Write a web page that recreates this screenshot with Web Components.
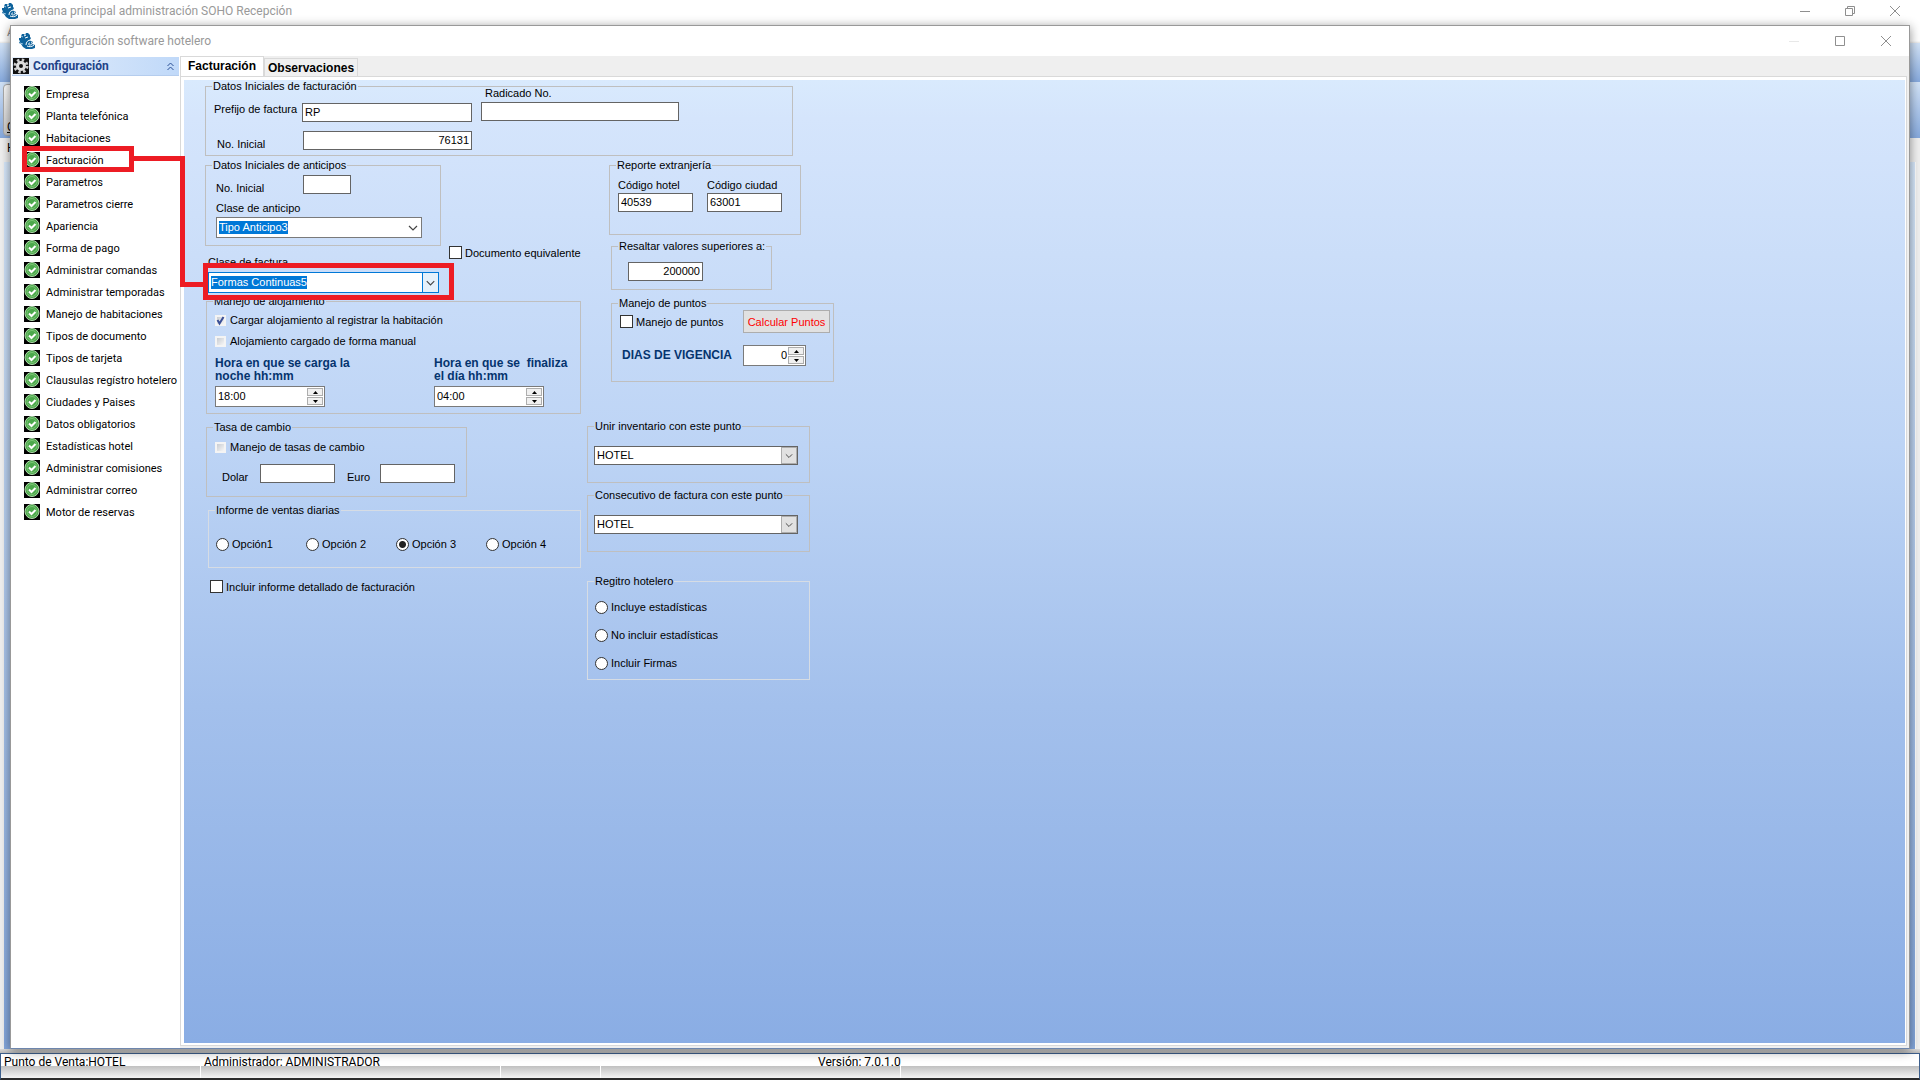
<!DOCTYPE html>
<html lang="es">
<head>
<meta charset="utf-8">
<title>Ventana principal administración SOHO Recepción</title>
<style>
    html, body { height: 100%; margin: 0; }
    body {
        --ui: Roboto, "Open Sans", sans-serif;
        --nav: Roboto, "Open Sans", sans-serif;
        --mark: #ed1c24;
        font: 11px/12px "Liberation Sans", Arial, sans-serif;
        color: #000;
        overflow: hidden;
    }

    /* form */
    .form { display: flex; flex-direction: column; align-items: flex-start; padding-left: 21px; }
    .columns { display: flex; gap: 6px; margin-top: 3px; }
    .column { display: flex; flex-direction: column; align-items: flex-start; }
    .column.left { width: 376px; }
    .row { display: flex; }
    .stack { display: flex; flex-direction: column; align-items: flex-start; }
    .indent { margin-left: 22px; }

    #facturacion { width: 588px; --min: 76px; --pad: 0 8px; }
    #facturacion .stack.a { gap: 9px; padding-top: 17px; width: 267px; }
    #facturacion .stack.b { padding-top: 1px; }
    #anticipos { width: 236px; --min: 87px; --pad: 10px 10px; }
    #clase { padding: 10px 0 0 3px; width: 231px; margin-right: 10px; }
    #alojamiento { width: 375px; margin: 2px 0 0 1px; --min: 119px; --pad: 12px 8px; }
    #alojamiento .stack { gap: 7px; }
    #alojamiento .row { padding-top: 9px; }
    #tasa { width: 261px; margin: 7px 0 0 1px; --min: 76px; --pad: 13px 8px; }
    #tasa .row { gap: 12px; padding: 10px 0 0 7px; }
    #ventas { width: 373px; margin: 7px 0 12px 3px; --min: 64px; --pad: 27px 7px; --line: #d6dce4; }
    #detalle { margin-left: 5px; }
    #extranjeria { width: 192px; --min: 76px; --pad: 14px 8px; }
    #extranjeria .row { gap: 14px; }
    #resaltar { width: 161px; margin: 5px 0 0 2px; --min: 50px; --pad: 16px 16px; }
    #puntos { width: 223px; margin: 7px 0 0 2px; --min: 85px; --pad: 7px 8px; }
    #puntos .stack { gap: 12px; }
    #puntos .row { align-items: center; }
    #puntos check-option { width: 123px; }
    #inventario { width: 223px; margin-top: 38px; --min: 63px; --pad: 20px 6px; }
    #consecutivo { width: 223px; margin-top: 6px; --min: 63px; --pad: 20px 6px; }
    #registro { width: 223px; margin-top: 23px; --min: 105px; --pad: 19px 7px; --line: #d6dce4; }
</style>
</head>
<body>
<main-desktop>
    <app-window slot="window" caption="Configuración software hotelero">
        <side-menu slot="side" caption="Configuración">
            <menu-entry>Empresa</menu-entry>
            <menu-entry>Planta telefónica</menu-entry>
            <menu-entry>Habitaciones</menu-entry>
            <menu-entry marked>Facturación</menu-entry>
            <menu-entry>Parametros</menu-entry>
            <menu-entry>Parametros cierre</menu-entry>
            <menu-entry>Apariencia</menu-entry>
            <menu-entry>Forma de pago</menu-entry>
            <menu-entry>Administrar comandas</menu-entry>
            <menu-entry>Administrar temporadas</menu-entry>
            <menu-entry>Manejo de habitaciones</menu-entry>
            <menu-entry>Tipos de documento</menu-entry>
            <menu-entry>Tipos de tarjeta</menu-entry>
            <menu-entry>Clausulas regístro hotelero</menu-entry>
            <menu-entry>Ciudades y Paises</menu-entry>
            <menu-entry>Datos obligatorios</menu-entry>
            <menu-entry>Estadísticas hotel</menu-entry>
            <menu-entry>Administrar comisiones</menu-entry>
            <menu-entry>Administrar correo</menu-entry>
            <menu-entry>Motor de reservas</menu-entry>
        </side-menu>
        <tab-panel tabs="Facturación,Observaciones">
            <div class="form">
                <group-box id="facturacion" caption="Datos Iniciales de facturación">
                    <div class="row">
                        <div class="stack a">
                            <text-field label="Prefijo de factura" value="RP" style="--label: 88px; --width: 170px; --align: flex-start"></text-field>
                            <text-field label="No. Inicial" value="76131" numeric style="--label: 89px; --width: 169px; --inset: 3px"></text-field>
                        </div>
                        <div class="stack b">
                            <text-field stacked label="Radicado No." style="--width: 198px; --inset: 4px; --gap: 3px"></text-field>
                        </div>
                    </div>
                </group-box>
                <div class="columns">
                    <div class="column left">
                        <group-box id="anticipos" caption="Datos Iniciales de anticipos">
                            <div class="stack">
                                <text-field label="No. Inicial" style="--label: 87px; --width: 48px"></text-field>
                                <combo-box label="Clase de anticipo" value="Tipo Anticipo3" selected style="--width: 206px; --height: 21px; --gap: 3px; --lead: 8px"></combo-box>
                            </div>
                        </group-box>
                        <div class="row">
                            <div id="clase">
                                <combo-box label="Clase de factura" value="Formas Continuas5" selected focused marked style="--width: 231px; --height: 21px; --gap: 4px"></combo-box>
                            </div>
                            <check-option large label="Documento equivalente"></check-option>
                        </div>
                        <group-box id="alojamiento" caption="Manejo de alojamiento">
                            <div class="stack">
                                <check-option disabled checked label="Cargar alojamiento al registrar la habitación"></check-option>
                                <check-option disabled label="Alojamiento cargado de forma manual"></check-option>
                            </div>
                            <div class="row">
                                <spin-box stacked label="Hora en que se carga la|noche hh:mm" value="18:00" style="--width: 110px; --label: 219px"></spin-box>
                                <spin-box stacked label="Hora en que se  finaliza|el día hh:mm" value="04:00" style="--width: 110px"></spin-box>
                            </div>
                        </group-box>
                        <group-box id="tasa" caption="Tasa de cambio">
                            <check-option disabled label="Manejo de tasas de cambio"></check-option>
                            <div class="row">
                                <text-field label="Dolar" style="--label: 38px; --width: 75px"></text-field>
                                <text-field label="Euro" style="--label: 33px; --width: 75px"></text-field>
                            </div>
                        </group-box>
                        <group-box id="ventas" caption="Informe de ventas diarias">
                            <radio-set options="Opción1,Opción 2,Opción 3,Opción 4" value="Opción 3"></radio-set>
                        </group-box>
                        <check-option id="detalle" large label="Incluir informe detallado de facturación"></check-option>
                    </div>
                    <div class="column">
                        <div class="stack indent">
                            <group-box id="extranjeria" caption="Reporte extranjería">
                                <div class="row">
                                    <text-field stacked label="Código hotel" value="40539" style="--width: 75px; --gap: 2px"></text-field>
                                    <text-field stacked label="Código ciudad" value="63001" style="--width: 75px; --gap: 2px"></text-field>
                                </div>
                            </group-box>
                            <group-box id="resaltar" caption="Resaltar valores superiores a:">
                                <text-field label="" name="Resaltar valores superiores a" value="200000" numeric style="--label: 0px; --width: 75px"></text-field>
                            </group-box>
                            <group-box id="puntos" caption="Manejo de puntos">
                                <div class="stack">
                                    <div class="row">
                                        <check-option large label="Manejo de puntos"></check-option>
                                        <push-button>Calcular Puntos</push-button>
                                    </div>
                                    <spin-box label="DIAS DE VIGENCIA" value="0" numeric style="--width: 63px; --label: 123px"></spin-box>
                                </div>
                            </group-box>
                        </div>
                        <group-box id="inventario" caption="Unir inventario con este punto">
                            <combo-box name="Unir inventario con este punto" value="HOTEL" boxed style="--width: 204px; --height: 19px"></combo-box>
                        </group-box>
                        <group-box id="consecutivo" caption="Consecutivo de factura con este punto">
                            <combo-box name="Consecutivo de factura con este punto" value="HOTEL" boxed style="--width: 204px; --height: 19px"></combo-box>
                        </group-box>
                        <group-box id="registro" caption="Regitro hotelero">
                            <radio-set vertical options="Incluye estadísticas,No incluir estadísticas,Incluir Firmas"></radio-set>
                        </group-box>
                    </div>
                </div>
            </div>
        </tab-panel>
    </app-window>
    <status-bar slot="status"></status-bar>
</main-desktop>

<script>
const appIcon = `
    <svg class="app" width="16" height="16" viewBox="0 0 16 16" aria-hidden="true">
        <path fill="#0f639c" d="M3 1h2l1 1 1-2h2l2 2v2l1 1-1 2 1 1 2 1-1 2 3 1v3l-3 1H7l-3-2-2-3-2-1 1-2-1-1V5h2V3z"/>
        <path fill="none" stroke="#fff" d="M5 3l2-1M6 5l3-1M7 12c0-3 2-5 5-5M8 13c2 1 5 1 7-1M11 10c-2 0-2 2 0 2s3-2 1-3"/>
        <path fill="none" stroke="#9cc6e2" d="M2 3l2 1M1 10l3 1"/>
    </svg>`;

const glyphs = {
    minimize: '<path d="M0 5.500h10"/>',
    maximize: '<path d="M.5.500h9v9h-9z"/>',
    restore: '<path d="M.5 2.500h7v7h-7zM2.500 2.500v-2h7v7h-2"/>',
    close: '<path d="M0 0l10 10M10 0L0 10"/>'
};

const controls = (names) => names.map((n) => `
    <button class="ctl ${n}" aria-label="${n}">
        <svg width="10" height="10" viewBox="0 0 10 10" fill="none" stroke="#8f8f8f">${glyphs[n]}</svg>
    </button>`).join('');

const titleCss = `
    .title { display: flex; align-items: center; font: 12px/16px var(--ui); color: #999; background: #fff; }
    .title .text { flex: 1; padding-left: 5px; white-space: nowrap; }
    .ctl { border: 0; padding: 0; background: none; width: 46px; height: 20px; display: grid; place-items: center; }
    .app { flex: none; }`;

// small base: every element renders its own template string once
class Base extends HTMLElement {
    connectedCallback() {
        if (this.shadowRoot) return;
        this.attachShadow({ mode: 'open' }).innerHTML = this.render();
    }
    attr(name) {
        return this.getAttribute(name) || '';
    }
    list(name) {
        return this.attr(name).split(',');
    }
}

class MainDesktop extends Base {
    render() {
        return `
            <style>
                :host { display: flex; flex-direction: column; height: 100vh; position: relative; background: #f0f0f0; }
                ${titleCss}
                .title { height: 22px; padding: 0 3px 0 2px; flex: none; }
                .ctl { width: 45px; }
                .menu { height: 21px; line-height: 21px; padding-left: 7px; background: linear-gradient(#fff 19px, #e6e6e6); font-family: var(--ui); font-size: 12px; color: #888; }
                .band { height: 39px; background: linear-gradient(#d3e4f8, #86a9dd); }
                .tools { height: 56px; background: linear-gradient(#d3e4f8, #86a9dd); display: flex; padding: 2px 3px; box-sizing: border-box; }
                .tool { border: 1px solid #aaa; border-radius: 4px; background: linear-gradient(#fff, #c9c9c9); width: 60px; padding: 34px 0 0 3px; text-align: left; font: 12px/12px var(--ui); text-decoration: underline; }
                .tabs { height: 24px; padding-left: 7px; font: 12px/20px var(--ui); }
                .work { flex: 1; margin: 0 4px 0 4px; background: linear-gradient(#d9eafd, #85a8de); border-right: 1px solid #fff; }
                .gap { height: 4px; background: linear-gradient(#ddd, #b9b9b9); }
                ::slotted(app-window) { position: absolute; inset: 25px 10px 31px 10px; }
            </style>
            <header class="title">${appIcon}<span class="text">Ventana principal administración SOHO Recepción</span>${controls(['minimize', 'restore', 'close'])}</header>
            <div class="menu">A</div>
            <div class="band"></div>
            <div class="tools"><button class="tool">C</button></div>
            <div class="tabs">H</div>
            <div class="work"></div>
            <div class="gap"></div>
            <slot name="status"></slot>
            <slot name="window"></slot>`;
    }
}

class AppWindow extends Base {
    render() {
        return `
            <style>
                :host { display: flex; flex-direction: column; background: #efefef; border: 1px solid #999; border-bottom-color: #6d86ad; box-sizing: border-box; box-shadow: 0 2px 10px rgba(0, 0, 0, .45); }
                ${titleCss}
                .title { height: 30px; padding-left: 8px; flex: none; }
                .minimize { opacity: .2; }
                .body { flex: 1; display: flex; min-height: 0; }
                ::slotted(tab-panel) { flex: 1; }
                .link { position: absolute; left: 121px; top: 129px; pointer-events: none; }
            </style>
            <header class="title">${appIcon}<span class="text">${this.attr('caption')}</span>${controls(['minimize', 'maximize', 'close'])}</header>
            <div class="body"><slot name="side"></slot><slot></slot></div>
            <svg class="link" width="74" height="134" fill="none" stroke="#ed1c24" stroke-width="5" aria-hidden="true"><path d="M0 3.500H50.500V129.500H72"/></svg>`;
    }
}

class SideMenu extends Base {
    render() {
        return `
            <style>
                :host { display: block; width: 169px; background: #fff; }
                .head { display: flex; align-items: center; height: 18px; margin: 1px 1px 0; padding: 0 4px 0 1px; background: linear-gradient(90deg, #e6effb, #c0d9f9); border-bottom: 1px solid #b5cdee; font: bold 12px/18px var(--nav); color: #1e4287; }
                .head span { flex: 1; padding-left: 4px; }
                nav { padding-top: 8px; }
            </style>
            <div class="head">
                <svg width="16" height="16" viewBox="0 0 16 16" aria-hidden="true">
                    <path fill="#111" d="M0 0h16v16H0z"/>
                    <circle cx="8" cy="8" r="6" fill="none" stroke="#ccc" stroke-width="3" stroke-dasharray="2.400 2.312"/>
                    <circle cx="8" cy="8" r="3.500" fill="none" stroke="#ddd" stroke-width="3"/>
                </svg>
                <span>${this.attr('caption')}</span>
                <svg width="9" height="9" viewBox="0 0 9 9" fill="none" stroke="#2a4f96" aria-hidden="true"><path d="M1.500 4l3-3 3 3M1.500 8l3-3 3 3"/></svg>
            </div>
            <nav><slot></slot></nav>`;
    }
}

class MenuEntry extends Base {
    render() {
        return `
            <style>
                :host { display: block; position: relative; }
                a { display: flex; align-items: flex-start; gap: 6px; height: 22px; padding-left: 13px; box-sizing: border-box; padding-top: 2px; font: 11px/18px var(--nav); color: #000; text-decoration: none; white-space: nowrap; }
                svg { flex: none; }
                :host([marked])::after { content: ""; position: absolute; left: 11px; top: -4px; width: 102px; height: 16px; border: 5px solid var(--mark); }
            </style>
            <a href="#">
                <svg width="16" height="16" viewBox="0 0 16 16" aria-hidden="true">
                    <path fill="#000" d="M0 0h16v16H0z"/>
                    <circle cx="8" cy="7.500" r="7" fill="#4ba84b" stroke="#b5dcb0"/>
                    <circle cx="8" cy="7.500" r="5" fill="none" stroke="#7cc675"/>
                    <path d="M5 7.500l2.500 2.500L11.500 6" fill="none" stroke="#fff" stroke-width="2"/>
                </svg>
                <slot></slot>
            </a>`;
    }
}

class TabPanel extends Base {
    render() {
        const tabs = this.list('tabs').map((t, i) => `<button role="tab" aria-selected="${i === 0}">${t}</button>`).join('');
        return `
            <style>
                :host { display: flex; flex-direction: column; min-width: 0; padding-right: 2px; padding-bottom: 2px; }
                .tabs { display: flex; align-items: flex-end; height: 20px; }
                button { font: bold 12px/16px "Liberation Sans", Arial, sans-serif; border: 1px solid #d9d9d9; border-bottom: 0; background: #f0f0f0; height: 18px; padding: 0 3px; }
                button[aria-selected="true"] { height: 21px; margin-bottom: -1px; padding: 0 7px 2px; background: #fff; }
                .panel { flex: 1; border: 1px solid #d9d9d9; background: #fff; padding: 3px 1px 2px 3px; display: flex; }
                .page { flex: 1; background: linear-gradient(#d9eafd, #d5e5fc 4%, #bdd4f5 38%, #a3c0ec 65%, #8aade4); }
            </style>
            <div class="tabs" role="tablist">${tabs}</div>
            <div class="panel"><div class="page"><slot></slot></div></div>`;
    }
}

class GroupBox extends Base {
    render() {
        return `
            <style>
                :host { display: block; box-sizing: border-box; }
                fieldset { margin: 0; padding: 0; border: 1px solid var(--line, #bfbfbf); box-sizing: border-box; min-width: 0; min-height: var(--min); }
                legend { margin-left: 6px; padding: 0 1px; line-height: 12px; white-space: nowrap; }
                .in { margin-top: -6px; padding: var(--pad); padding-bottom: 0; }
            </style>
            <fieldset><legend>${this.attr('caption')}</legend><div class="in"><slot></slot></div></fieldset>`;
    }
}

class TextField extends Base {
    render() {
        const name = this.attr('name');
        return `
            <style>
                :host { display: flex; align-items: var(--align, flex-end); }
                :host([stacked]) { flex-direction: column; align-items: flex-start; gap: var(--gap, 0); }
                label { width: var(--label, auto); flex: none; padding-left: var(--inset, 0); white-space: nowrap; box-sizing: border-box; }
                input { font: inherit; width: var(--width); height: 19px; box-sizing: border-box; border: 1px solid #646464; background: #fff; padding: 0 2px 2px; margin: 0; }
                :host([numeric]) input { text-align: right; }
            </style>
            <label for="f">${this.attr('label')}</label><input id="f" ${name ? `aria-label="${name}"` : ''} value="${this.attr('value')}">`;
    }
}

class ComboBox extends Base {
    render() {
        const name = this.attr('name');
        const label = this.attr('label');
        return `
            <style>
                :host { display: flex; flex-direction: column; gap: var(--gap, 0); padding-top: var(--lead, 0); }
                .box { position: relative; display: flex; width: var(--width); height: var(--height); }
                select { appearance: none; font: inherit; flex: 1; border: 1px solid #7a7a7a; border-radius: 0; background: #fff; color: #000; padding: 0 2px 1px; margin: 0; outline: 0; }
                :host([selected]) select { color: #fff; }
                svg { position: absolute; right: 1px; top: 1px; width: 16px; height: calc(100% - 2px); box-sizing: border-box; pointer-events: none; }
                :host([boxed]) svg { background: #e1e1e1; border: 1px solid #adadad; }
                :host([boxed]) select { border-color: #646464; }
                :host([focused]) select { border-color: #0078d7; }
                :host([focused]) svg { background: #e5f1fb; border-left: 1px solid #0078d7; }
                :host([selected]) .box::before { content: attr(data-text); position: absolute; left: 3px; top: 4px; line-height: 13px; color: #fff; background: #0078d7; pointer-events: none; }
                :host([marked]) .box::after { content: ""; position: absolute; inset: -9px -15px -7px -5px; border: 5px solid var(--mark); pointer-events: none; }
            </style>
            ${label ? `<label for="c">${label}</label>` : ''}
            <div class="box" data-text="${this.attr('value')}">
                <select id="c" ${name ? `aria-label="${name}"` : ''}><option>${this.attr('value')}</option></select>
                <svg viewBox="0 0 16 19" fill="none" stroke="#444" stroke-width="1.200"><path d="M4 8l4 4 4-4"/></svg>
            </div>`;
    }
}

class SpinBox extends Base {
    render() {
        return `
            <style>
                :host { display: flex; align-items: center; }
                :host([stacked]) { flex-direction: column; align-items: flex-start; gap: 3px; }
                label { width: var(--label, auto); font: bold 12px/13px "Liberation Sans", Arial, sans-serif; color: #05346e; white-space: pre; padding-left: 2px; box-sizing: border-box; }
                :host([stacked]) label { padding-left: 0; }
                .box { display: flex; width: var(--width); height: 21px; box-sizing: border-box; border: 1px solid #7a7a7a; background: #fff; padding: 1px; }
                input { font: inherit; flex: 1; min-width: 0; border: 0; padding: 0 1px 2px; margin: 0; background: none; }
                :host([numeric]) input { text-align: right; }
                .arrows { display: flex; flex-direction: column; gap: 1px; width: 16px; }
                button { flex: 1; padding: 0; border: 1px solid #adadad; background: #f0f0f0; display: grid; place-items: center; }
            </style>
            <label for="s">${this.attr('label').replace('|', '\n')}</label>
            <div class="box">
                <input id="s" value="${this.attr('value')}">
                <div class="arrows">
                    <button aria-label="Subir"><svg width="5" height="3"><path d="M0 3L2.500 0 5 3z"/></svg></button>
                    <button aria-label="Bajar"><svg width="5" height="3"><path d="M0 0h5L2.500 3z"/></svg></button>
                </div>
            </div>`;
    }
}

class CheckOption extends Base {
    render() {
        return `
            <style>
                :host { display: block; white-space: nowrap; }
                label { display: inline-flex; align-items: center; gap: 4px; height: 14px; vertical-align: top; }
                :host([large]) label { height: 13px; gap: 3px; }
                input { appearance: none; margin: 0; width: 11px; height: 11px; border: 2px solid #f4f4f4; background: linear-gradient(135deg, #c8ccd2, #f6f6f6); box-sizing: border-box; }
                :host([large]) input { width: 13px; height: 13px; border: 1px solid #333; background: #fff; }
                .tick { position: absolute; width: 11px; height: 11px; }
            </style>
            <label>
                <input type="checkbox" ${this.hasAttribute('checked') ? 'checked' : ''}>
                ${this.hasAttribute('checked') ? '<svg class="tick" viewBox="0 0 11 11" fill="none" stroke="#3a4f96" stroke-width="2"><path d="M2.500 5l2 3.500L8.500 2"/></svg>' : ''}
                <span>${this.attr('label')}</span>
            </label>`;
    }
}

class RadioSet extends Base {
    render() {
        const items = this.list('options').map((o) => `
            <label><input type="radio" name="r" ${o === this.attr('value') ? 'checked' : ''}>${o}</label>`).join('');
        return `
            <style>
                :host { display: flex; }
                :host([vertical]) { flex-direction: column; gap: 14px; }
                label { display: flex; flex: none; align-items: center; gap: 3px; width: 90px; height: 14px; white-space: nowrap; }
                input { appearance: none; margin: 0; width: 13px; height: 13px; flex: none; border: 1px solid #333; border-radius: 50%; background: #fff; box-sizing: border-box; }
                input:checked { background: radial-gradient(circle, #222 3px, #fff 4px); }
            </style>${items}`;
    }
}

class PushButton extends Base {
    render() {
        return `
            <style>
                :host { display: block; }
                button { font: inherit; width: 87px; height: 23px; padding: 0; border: 1px solid #adadad; background: #e1e1e1; color: #f00; white-space: nowrap; }
            </style>
            <button><slot></slot></button>`;
    }
}

class StatusBar extends Base {
    render() {
        return `
            <style>
                :host { display: grid; grid-template-columns: 199px 299px 99px 299px 1fr; column-gap: 1px; flex: none; border: 1px solid #3d5f8c; border-bottom: 2px solid #2b2b2b; background: #fff; height: 24px; font: 12px/16px var(--ui); }
                span { padding-left: 3px; white-space: nowrap; background: linear-gradient(#fff 12px, #c0c0c0 12px, #f4f4f4 24px); }
                .version { padding-left: 217px; }
            </style>
            <span>Punto de Venta:HOTEL</span><span>Administrador: ADMINISTRADOR</span><span></span><span class="version">Versión: 7.0.1.0</span><span></span>`;
    }
}

customElements.define('main-desktop', MainDesktop);
customElements.define('app-window', AppWindow);
customElements.define('side-menu', SideMenu);
customElements.define('menu-entry', MenuEntry);
customElements.define('tab-panel', TabPanel);
customElements.define('group-box', GroupBox);
customElements.define('text-field', TextField);
customElements.define('combo-box', ComboBox);
customElements.define('spin-box', SpinBox);
customElements.define('check-option', CheckOption);
customElements.define('radio-set', RadioSet);
customElements.define('push-button', PushButton);
customElements.define('status-bar', StatusBar);
</script>
</body>
</html>
